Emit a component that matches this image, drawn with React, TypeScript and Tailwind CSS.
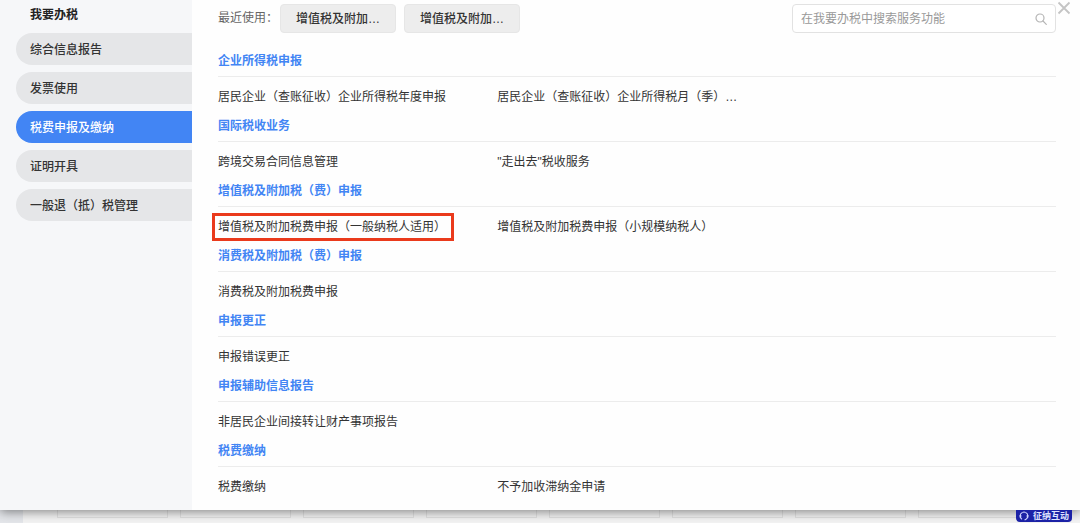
import { useState } from "react";

type Item = { nombre: string; highlight?: boolean };
type Section = { title: string; items: Item[] };

const menu = ["综合信息报告", "发票使用", "税费申报及缴纳", "证明开具", "一般退（抵）税管理"];

const recent = ["增值税及附加…", "增值税及附加…"];

const sections: Section[] = [
  { title: "企业所得税申报", items: [{ nombre: "居民企业（查账征收）企业所得税年度申报" }, { nombre: "居民企业（查账征收）企业所得税月（季）…" }] },
  { title: "国际税收业务", items: [{ nombre: "跨境交易合同信息管理" }, { nombre: '"走出去"税收服务' }] },
  { title: "增值税及附加税（费）申报", items: [{ nombre: "增值税及附加税费申报（一般纳税人适用）", highlight: true }, { nombre: "增值税及附加税费申报（小规模纳税人）" }] },
  { title: "消费税及附加税（费）申报", items: [{ nombre: "消费税及附加税费申报" }] },
  { title: "申报更正", items: [{ nombre: "申报错误更正" }] },
  { title: "申报辅助信息报告", items: [{ nombre: "非居民企业间接转让财产事项报告" }] },
  { title: "税费缴纳", items: [{ nombre: "税费缴纳" }, { nombre: "不予加收滞纳金申请" }] },
];

function Sidebar() {
  const [active, setActive] = useState("税费申报及缴纳");

  return (
    <nav className="w-48 shrink-0 bg-[#f6f7f9] pl-4">
      <h1 className="h-[33px] pt-[5px] pl-[14px] text-xs leading-5 font-bold text-[#222]">我要办税</h1>
      <div className="flex flex-col gap-[7px]">
        {menu.map((m) => (
          <button key={m} onClick={() => setActive(m)}
            className={`h-8 rounded-l-full pt-0.5 pl-[14px] text-left text-xs font-medium ${m === active ? "bg-[#4285f4] text-white" : "bg-[#e5e6e8] text-[#333]"}`}>
            {m}
          </button>
        ))}
      </div>
    </nav>
  );
}

function TopBar() {
  return (
    <div className="flex items-start pt-1">
      <span className="w-[62px] shrink-0 text-xs leading-7 text-[#666]">最近使用：</span>
      <div className="flex gap-2">
        {recent.map((r, i) => (
          <button key={i} className="h-[29px] rounded-sm border border-[#e6e6e6] bg-[#ededed] px-[15px] text-xs font-medium text-[#333]">{r}</button>
        ))}
      </div>
      <div className="ml-auto flex h-[29px] w-[264px] items-center rounded-sm border border-[#e2e2e2] bg-white pr-2 pl-2">
        <input type="search" aria-label="在我要办税中搜索服务功能" placeholder="在我要办税中搜索服务功能"
          className="min-w-0 flex-1 text-xs outline-none placeholder:text-[#999]" />
        <button aria-label="搜索">
          <svg viewBox="0 0 12 12" className="size-3" fill="none" stroke="#b5b5b5" strokeWidth="1.2" strokeLinecap="round">
            <circle cx="5" cy="5" r="4" />
            <path d="M8 8 L11.3 11.3" />
          </svg>
        </button>
      </div>
    </div>
  );
}

export default function App() {
  return (
    <div className="min-h-screen overflow-hidden bg-[#f3f3f3] font-['Liberation_Sans','Noto_Sans_CJK_SC',sans-serif]">
      <div className="relative z-10 flex bg-[#fefefe] shadow-[0_2px_10px_rgba(0,0,0,0.45)]">
        <Sidebar />
        <main className="min-w-0 flex-1 pr-6 pb-[10px] pl-[26px]">
          <TopBar />
          <div className="pt-3">
            {sections.map((s) => (
              <section key={s.title}>
                <h2 className="h-8 border-b border-[#ececec] text-xs leading-[33px] font-bold text-[#4285f4]">{s.title}</h2>
                <div className="grid grid-cols-3 pt-[10px] pb-[3px]">
                  {s.items.map((item) => (
                    <div key={item.nombre} className="text-xs leading-5 whitespace-nowrap text-[#333]">
                      <a href="#" className="relative inline-block">
                        {item.nombre}
                        {item.highlight && <span className="absolute -inset-y-1 -right-2 -left-1.5 border-[3px] border-[#ea3a1c]" />}
                      </a>
                    </div>
                  ))}
                </div>
              </section>
            ))}
          </div>
        </main>
        <button aria-label="关闭" className="absolute top-[1px] right-[9px]">
          <svg viewBox="0 0 14 14" className="size-[14px]" fill="none" stroke="#c4c4c4" strokeWidth="1.8">
            <path d="M1.5 1.5 L12.5 12.5 M12.5 1.5 L1.5 12.5" />
          </svg>
        </button>
      </div>

      {/* page behind the panel */}
      <div className="relative flex h-[13px]">
        <div className="w-[23px] shrink-0 bg-[#e4e6ea]" />
        <div className="flex min-w-0 flex-1 gap-3 overflow-hidden pl-[34px]">
          {Array.from({ length: 8 }, (_, i) => (
            <div key={i} className="h-2 w-[111px] shrink-0 border border-t-0 border-[#e2e2e2] bg-[#f3f3f3]" />
          ))}
        </div>
        <button className="absolute top-0 right-2 z-20 flex h-3 w-14 items-center justify-center gap-1 rounded-b-sm bg-[#1c22a6] text-[9px] leading-3 font-bold whitespace-nowrap text-[#dfe2ff]">
          <svg viewBox="0 0 10 10" className="size-[10px] shrink-0" fill="none" stroke="#cfd3ff" strokeWidth="1.1">
            <path d="M3.4 1.4 A3.8 3.8 0 0 0 3 8.2" />
            <path d="M6.6 1.4 A3.8 3.8 0 0 1 7 8.2 L5.6 9" />
            <path d="M3.4 1.4 Q5 0.7 6.6 1.4" />
            <path d="M1.5 4 V6.5 M8.5 4 V6.5" strokeWidth="1.6" />
          </svg>
          征纳互动
        </button>
      </div>
    </div>
  );
}
